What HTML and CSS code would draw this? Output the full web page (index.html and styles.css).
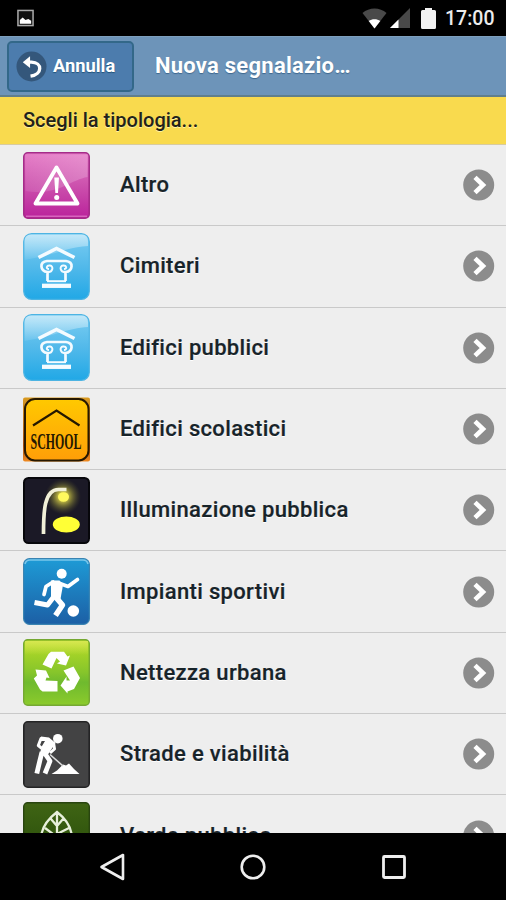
FILE: index.html
```html
<!DOCTYPE html>
<html lang="it">
<head>
<meta charset="utf-8">
<title>Nuova segnalazione</title>
<link rel="stylesheet" href="styles.css">
</head>
<body>
<svg class="defs" aria-hidden="true">
  <defs>
    <linearGradient id="pink" x1="0" y1="0" x2="0" y2="1"><stop offset="0" stop-color="#e57bc6"/><stop offset=".5" stop-color="#cc51ad"/><stop offset="1" stop-color="#ba229b"/></linearGradient>
    <linearGradient id="pinkShine" x1="0" y1="0" x2="1" y2=".4"><stop offset="0" stop-color="#fff" stop-opacity=".03"/><stop offset="1" stop-color="#fff" stop-opacity=".2"/></linearGradient>
    <linearGradient id="sky" x1="0" y1="0" x2="0" y2="1"><stop offset="0" stop-color="#7bcdf2"/><stop offset=".5" stop-color="#52b9ea"/><stop offset="1" stop-color="#21a8e6"/></linearGradient>
    <linearGradient id="skyShine" x1="0" y1="0" x2="0" y2="1"><stop offset="0" stop-color="#fff" stop-opacity=".55"/><stop offset="1" stop-color="#fff" stop-opacity=".08"/></linearGradient>
    <linearGradient id="amber" x1="0" y1="0" x2="0" y2="1"><stop offset="0" stop-color="#ffc900"/><stop offset="1" stop-color="#ff9e08"/></linearGradient>
    <linearGradient id="amberEdge" x1="0" y1="0" x2="0" y2="1"><stop offset="0" stop-color="#d99a20"/><stop offset=".75" stop-color="#a04a10"/><stop offset="1" stop-color="#f08a20"/></linearGradient>
    <radialGradient id="glow"><stop offset="0" stop-color="#ffff70"/><stop offset=".3" stop-color="#cfc846" stop-opacity=".85"/><stop offset="1" stop-color="#55552a" stop-opacity="0"/></radialGradient>
    <linearGradient id="blue" x1="0" y1="0" x2="0" y2="1"><stop offset="0" stop-color="#1e9bd6"/><stop offset="1" stop-color="#1c5fa5"/></linearGradient>
    <linearGradient id="lime" x1="0" y1="0" x2="0" y2="1"><stop offset="0" stop-color="#b9dc25"/><stop offset=".5" stop-color="#86c52b"/><stop offset=".65" stop-color="#6fba2e"/><stop offset="1" stop-color="#8ccb2c"/></linearGradient>
    <linearGradient id="limeShine" x1="0" y1="0" x2="0" y2="1"><stop offset="0" stop-color="#e4ed63" stop-opacity=".7"/><stop offset="1" stop-color="#e4ed63" stop-opacity="0"/></linearGradient>
    <linearGradient id="forest" x1="0" y1="0" x2="0" y2="1"><stop offset="0" stop-color="#3f6414"/><stop offset="1" stop-color="#254a08"/></linearGradient>
    <symbol id="building" viewBox="0 0 67 67">
      <rect x=".7" y=".7" width="65.6" height="65.6" rx="8" fill="url(#sky)" stroke="#4db4e3" stroke-width="1.2"/>
      <path d="M8 1.5H59Q65 1.5 65 8V13C45 14 32 22 1.500 27V8Q1.500 1.500 8 1.500Z" fill="url(#skyShine)"/>
      <g fill="none" stroke="#f4fbff" stroke-width="2.700">
        <path d="M15.500 24.500 33.500 15.500 51.500 24.500" stroke-width="3.600"/>
        <path d="M24.500 48V39C17 38 16 28.500 24 28H43C51 28.500 50 38 42.500 39V48"/>
        <path d="M24 39C30 40 31 33 27 32.500C23.500 32 22.500 36 26 36M43 39C37 40 36 33 40 32.500C43.500 32 44.500 36 41 36" stroke-width="2"/>
        <path d="M24 48.200H43" stroke-width="2"/><path d="M19 52.800H48" stroke-width="4.300"/>
      </g>
    </symbol>
    <symbol id="chevron" viewBox="0 0 32 32">
      <circle cx="15.700" cy="16" r="15.500" fill="#8c8c8c"/>
      <path d="M12 8.300 20 16 12 23.700" fill="none" stroke="#fff" stroke-width="4.600"/>
    </symbol>
  </defs>
</svg>
<div class="phone">
  <div class="status">
    <svg class="status-picture" viewBox="0 0 18 18"><rect x="1" y="1" width="16" height="16" fill="#111" stroke="#aaa" stroke-width="1.600"/><path d="M3 15V11L6 8.500 9 11 12 10 15 12V15Z" fill="#fff"/></svg>
    <div class="status-right">
      <svg class="wifi" viewBox="0 0 25 21"><path d="M.5 5C7-1 18-1 24.500 5L12.500 20.500Z" fill="#494949"/><path d="M6.700 13C10 10.500 15 10.500 18.300 13L12.500 20.500Z" fill="#fff"/></svg>
      <svg class="signal" viewBox="0 0 20 20"><path d="M20 0V20H0Z" fill="#494949"/><path d="M8.500 11.500V20H0Z" fill="#fff"/></svg>
      <svg class="battery" viewBox="0 0 15 21"><path d="M4 2V0H11V2H13.500Q15 2 15 3.500V19.500Q15 21 13.500 21H1.500Q0 21 0 19.500V3.500Q0 2 1.500 2Z" fill="#f2f2f2"/></svg>
      <span class="clock">17:00</span>
    </div>
  </div>
  <header class="header">
    <button class="cancel">
      <svg class="undo" viewBox="0 0 32 32"><circle cx="16" cy="16" r="15.500" fill="#34577b"/><path d="M11 11.500H16C27.500 12 27.500 24 15 26" fill="none" stroke="#fff" stroke-width="3.400"/><path d="M7 11.500 14.500 5.500V17.500Z" fill="#fff"/></svg>
      <span>Annulla</span>
    </button>
    <h1 class="title">Nuova segnalazio…</h1>
  </header>
  <div class="subtitle">Scegli la tipologia...</div>
  <ul class="list">
    <li class="row">
      <svg class="icon" viewBox="0 0 67 67"><rect x=".8" y=".8" width="65.400" height="65.400" rx="4" fill="url(#pink)" stroke="#a52c89" stroke-width="1.600"/><path d="M2.500 2.500H64.500V25C47 28 35 44 2.500 39Z" fill="url(#pinkShine)"/><path d="M3 64.200H64" stroke="#d765bd" stroke-width="1.500"/><path d="M33.500 15.500 54.500 51.500H12.500Z" fill="none" stroke="#fff" stroke-width="3.900" stroke-linejoin="round"/><path d="M31.300 25.500H36L35 41H32.300Z" fill="#fff"/><circle cx="33.700" cy="45.500" r="2.500" fill="#fff"/></svg>
      <span class="label">Altro</span><svg class="go"><use href="#chevron"/></svg>
    </li>
    <li class="row">
      <svg class="icon"><use href="#building"/></svg>
      <span class="label">Cimiteri</span><svg class="go"><use href="#chevron"/></svg>
    </li>
    <li class="row">
      <svg class="icon"><use href="#building"/></svg>
      <span class="label">Edifici pubblici</span><svg class="go"><use href="#chevron"/></svg>
    </li>
    <li class="row">
      <svg class="icon" viewBox="0 0 67 67"><rect x="0" y="1.500" width="67" height="64" rx="2" fill="url(#amberEdge)"/><rect x="2" y="3" width="63.500" height="61.500" rx="10" fill="url(#amber)" stroke="#271800" stroke-width="2"/><path d="M10 29.500 33.500 14.500 56.500 29.500" fill="none" stroke="#251800" stroke-width="2.200"/><text x="7.500" y="52.500" textLength="51" lengthAdjust="spacingAndGlyphs" class="school-text">SCHOOL</text></svg>
      <span class="label">Edifici scolastici</span><svg class="go"><use href="#chevron"/></svg>
    </li>
    <li class="row">
      <svg class="icon" viewBox="0 0 67 67"><rect x="1" y="1" width="65" height="65" rx="4.500" fill="#1b1926" stroke="#07070b" stroke-width="2"/><circle cx="40" cy="19.500" r="18" fill="url(#glow)"/><path d="M20.500 57C20.500 35 21 12 36 12.500H43.500" fill="none" stroke="#f1f0d8" stroke-width="3.700"/><ellipse cx="40.500" cy="20" rx="5.500" ry="4.800" fill="#fff85e"/><ellipse cx="43.300" cy="47.500" rx="13.500" ry="8" fill="#ffff36"/></svg>
      <span class="label">Illuminazione pubblica</span><svg class="go"><use href="#chevron"/></svg>
    </li>
    <li class="row">
      <svg class="icon" viewBox="0 0 67 67"><rect x=".6" y=".6" width="65.800" height="65.800" rx="6" fill="url(#blue)" stroke="#3a84b2" stroke-width="1.200"/><path d="M2 6Q3 2 7 2H60Q64 2 65 6" fill="none" stroke="#7ac6ea" stroke-width="1.500"/><g fill="#fff"><circle cx="38.700" cy="15.800" r="5"/><path d="M28 22.500H36.500L40 27 37.500 41H28Z"/><circle cx="50.300" cy="53" r="5.800"/></g><g fill="none" stroke="#fff" stroke-linejoin="round"><path d="M37 25.500 45 28.500 54.500 21.500M30 24 23 28.500 21 36.500" stroke-width="3.700" stroke-linecap="round"/><path d="M31 38.500 24.500 47 11.500 44.500" stroke-width="5"/><path d="M33 39.500 39.500 47 32.500 57.500" stroke-width="5.500"/></g></svg>
      <span class="label">Impianti sportivi</span><svg class="go"><use href="#chevron"/></svg>
    </li>
    <li class="row">
      <svg class="icon" viewBox="0 0 67 67"><rect x=".7" y=".7" width="65.600" height="65.600" rx="4" fill="url(#lime)" stroke="#75a833" stroke-width="1.400"/><path d="M2 2H65V16H2Z" fill="url(#limeShine)"/><g fill="#fff"><path d="M19.500 25.500 25.500 15 28 12.800H41L44.500 17.500 47 16.500 43 26.500 34 24.500 37 22.500 33.500 19 28.500 29.500Z"/><path d="M12.500 30.500 23 31.500 26.500 39 23.500 38.500 22.500 41.500 34.500 42V52.500H19.500L17 50.500 10.800 39.500 14 36.500Z"/><path d="M40.500 31.500 50.500 27.500 57 39 51 50 44.500 52.500V54.500L37.500 46.500 43.500 37.500V41.500H47Z"/></g></svg>
      <span class="label">Nettezza urbana</span><svg class="go"><use href="#chevron"/></svg>
    </li>
    <li class="row">
      <svg class="icon" viewBox="0 0 67 67"><rect x=".8" y=".8" width="65.400" height="65.400" rx="4" fill="#434344" stroke="#242425" stroke-width="1.600"/><g fill="#fff"><circle cx="34.800" cy="17.700" r="4.800"/><path d="M18 15.500 26 16.500 32.500 22 25 33.500H16.500L19 25 22 20H18Z"/><path d="M28.500 53 34 49.500 40 43.500 43 44.500 46 42.500 51 48 56.500 53Z"/></g><path d="M27 33.500 40 45" stroke="#ddd" stroke-width="1.600"/><g fill="none" stroke="#fff" stroke-linejoin="round"><path d="M21 17.500H18L15.300 24.500 19 27.500M30.500 21.500 31.500 28 27 32" stroke-width="3"/><path d="M19 31 17 39 13.800 52.500M21.500 32 27 40 22 52.500" stroke-width="4.800"/></g></svg>
      <span class="label">Strade e viabilità</span><svg class="go"><use href="#chevron"/></svg>
    </li>
    <li class="row">
      <svg class="icon" viewBox="0 0 67 67"><rect x=".7" y=".7" width="65.600" height="65.600" rx="4" fill="url(#forest)" stroke="#294510" stroke-width="1.400"/><path d="M34 10C25 17 18 25 18 37C18 48 26 54 34 54C42 54 49 48 49 37C49 25 43 17 34 10ZM34 10V62M34 24 28 17M34 24 40 17M34 35 22 26M34 32 46 26M34 48 19 36M34 44 49 35" fill="none" stroke="#e7f0db" stroke-width="2.300"/></svg>
      <span class="label">Verde pubblico</span><svg class="go"><use href="#chevron"/></svg>
    </li>
  </ul>
  <nav class="nav">
    <svg class="nav-icon" viewBox="0 0 28 28"><path d="M24 2V26L2.500 14Z" fill="none" stroke="#eee" stroke-width="2.600" stroke-linejoin="round"/></svg>
    <svg class="nav-icon" viewBox="0 0 28 28"><circle cx="14" cy="14" r="11.300" fill="none" stroke="#eee" stroke-width="2.600"/></svg>
    <svg class="nav-icon" viewBox="0 0 28 28"><rect x="3.500" y="3.500" width="21" height="21" rx="1" fill="none" stroke="#eee" stroke-width="2.800"/></svg>
  </nav>
</div>
</body>
</html>
```
FILE: styles.css
```css
* { box-sizing: border-box; }
body { margin: 0; font-family: Roboto, "Liberation Sans", sans-serif; color: #172329; }
.defs { display: block; width: 0; height: 0; }
.phone { width: 506px; height: 900px; display: flex; flex-direction: column; overflow: hidden; background: #000; }
.status { flex: 0 0 36px; display: flex; justify-content: space-between; align-items: center; padding: 0 11px 0 17px; background: #000; }
.status-picture { width: 17px; height: 18px; }
.status-right { display: flex; align-items: center; color: #ececec; }
.wifi { width: 25px; height: 21px; }
.signal { width: 20px; height: 20px; margin-left: 3px; }
.battery { width: 15px; height: 21px; margin-left: 11px; }
.clock { margin-left: 9px; width: 50px; font-size: 19.5px; font-weight: 500; line-height: 24px; padding-top: 2px; white-space: nowrap; }
.header { flex: 0 0 61px; display: flex; align-items: center; padding-left: 7px; background: #6d94b9; border-bottom: 2px solid #617f8c; border-top: 1px solid #7e9fbd; }
.cancel { width: 127px; height: 51px; margin: 1px 0 0; padding: 0 0 3px 7px; display: flex; align-items: center; gap: 6px; background: #4c7cad; border: 2px solid #336889; border-radius: 5px; color: #fff; font: 700 18.3px Roboto, sans-serif; text-shadow: 0 1px 1px #23547b; }
.undo { width: 31px; height: 31px; margin-top: 3px; flex: none; }
.title { margin: 0 0 0 21px; color: #fff; font-size: 22px; line-height: 28px; font-weight: 700; letter-spacing: .25px; white-space: nowrap; text-shadow: 0 1px 1px #3e678e; }
.subtitle { flex: 0 0 48px; padding: 0 23px; line-height: 46px; font-size: 20px; font-weight: 500; background: #f9da4e; border-bottom: 1px solid #d8cba0; color: #22221b; text-shadow: 0 1px 0 #fff3a0; }
.list { flex: 0 0 688px; height: 688px; margin: 0; padding: 0; list-style: none; overflow: hidden; background: #eee; }
.row { height: 81.3px; display: flex; align-items: center; padding: 0 11px 0 23px; border-bottom: 1px solid #c9c9c9; }
.icon { width: 67px; height: 67px; flex: none; }
.label { flex: 1; margin-left: 30px; font-size: 22px; line-height: 28px; font-weight: 500; letter-spacing: .34px; -webkit-text-stroke: .2px currentColor; white-space: nowrap; text-shadow: 0 1px 0 #fff; }
.go { width: 32px; height: 32px; flex: none; }
.school-text { font: 700 24px "Liberation Serif", serif; fill: #251800; }
.nav { flex: 0 0 67px; display: flex; justify-content: center; align-items: center; gap: 112.500px; background: #000; }
.nav-icon { width: 28px; height: 28px; }
```
